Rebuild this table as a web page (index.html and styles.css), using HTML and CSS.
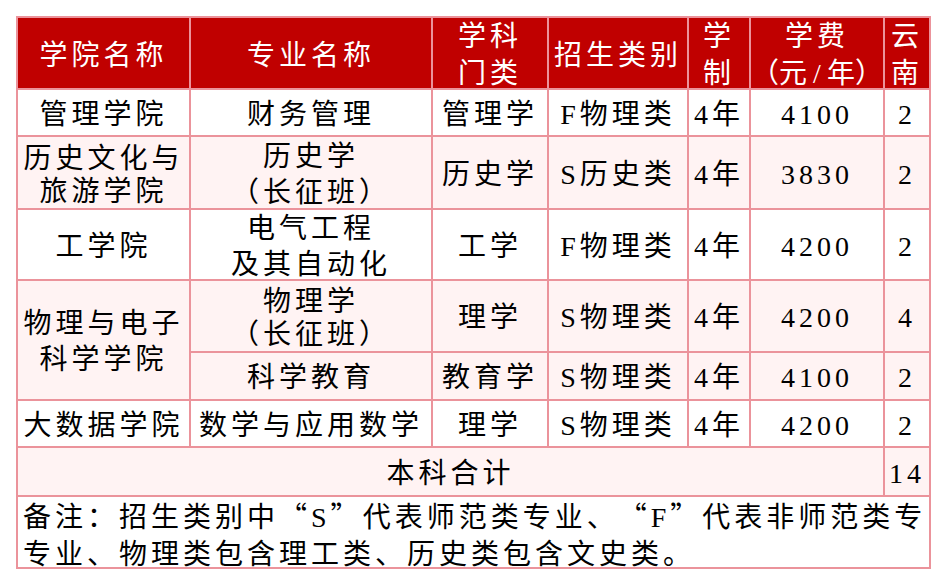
FILE: index.html
```html
<!DOCTYPE html>
<html lang="zh-CN">
<head>
<meta charset="utf-8">
<title>招生计划</title>
<link rel="stylesheet" href="styles.css">
</head>
<body>
<div class="page">
  <div class="sheet">
    <div class="c h"><span class="t">学院名称</span></div>
    <div class="c h"><span class="t">专业名称</span></div>
    <div class="c h"><span class="t">学科<br>门类</span></div>
    <div class="c h"><span class="t">招生类别</span></div>
    <div class="c h"><span class="t">学<br>制</span></div>
    <div class="c h"><span class="t">学费<br><span class="fee">（元<span class="slash">/</span>年）</span></span></div>
    <div class="c h"><span class="t">云<br>南</span></div>

    <div class="c"><span class="t">管理学院</span></div>
    <div class="c"><span class="t">财务管理</span></div>
    <div class="c"><span class="t">管理学</span></div>
    <div class="c"><span class="t">F物理类</span></div>
    <div class="c"><span class="t">4年</span></div>
    <div class="c"><span class="t">4100</span></div>
    <div class="c"><span class="t">2</span></div>

    <div class="c p tight"><span class="t">历史文化与<br>旅游学院</span></div>
    <div class="c p"><span class="t">历史学<br>（长征班）</span></div>
    <div class="c p"><span class="t">历史学</span></div>
    <div class="c p"><span class="t">S历史类</span></div>
    <div class="c p"><span class="t">4年</span></div>
    <div class="c p"><span class="t">3830</span></div>
    <div class="c p"><span class="t">2</span></div>

    <div class="c"><span class="t">工学院</span></div>
    <div class="c"><span class="t">电气工程<br>及其自动化</span></div>
    <div class="c"><span class="t">工学</span></div>
    <div class="c"><span class="t">F物理类</span></div>
    <div class="c"><span class="t">4年</span></div>
    <div class="c"><span class="t">4200</span></div>
    <div class="c"><span class="t">2</span></div>

    <div class="c p rows2"><span class="t">物理与电子<br>科学学院</span></div>
    <div class="c p tight"><span class="t">物理学<br>（长征班）</span></div>
    <div class="c p"><span class="t">理学</span></div>
    <div class="c p"><span class="t">S物理类</span></div>
    <div class="c p"><span class="t">4年</span></div>
    <div class="c p"><span class="t">4200</span></div>
    <div class="c p"><span class="t">4</span></div>

    <div class="c p"><span class="t">科学教育</span></div>
    <div class="c p"><span class="t">教育学</span></div>
    <div class="c p"><span class="t">S物理类</span></div>
    <div class="c p"><span class="t">4年</span></div>
    <div class="c p"><span class="t">4100</span></div>
    <div class="c p"><span class="t">2</span></div>

    <div class="c"><span class="t">大数据学院</span></div>
    <div class="c"><span class="t">数学与应用数学</span></div>
    <div class="c"><span class="t">理学</span></div>
    <div class="c"><span class="t">S物理类</span></div>
    <div class="c"><span class="t">4年</span></div>
    <div class="c"><span class="t">4200</span></div>
    <div class="c"><span class="t">2</span></div>

    <div class="c p cols6"><span class="t">本科合计</span></div>
    <div class="c p"><span class="t">14</span></div>

    <div class="c note"><span class="t">备注：招生类别中<span class="q">“</span>S<span class="q">”</span>代表师范类专业、<span class="q">“</span>F<span class="q">”</span>代表非师范类专<br>专业、物理类包含理工类、历史类包含文史类。</span></div>
  </div>
</div>
</body>
</html>
```

FILE: styles.css
```css
body {
  margin: 0;
  background: #ffffff;
}

.page {
  padding: 16px 0 0 16px;
}

.sheet {
  display: grid;
  grid-template-columns: 171px 240px 114px 138px 60px 132px 44px;
  grid-template-rows: 70px 45px 71px 69px 70px 46px 45px 47px 70px;
  gap: 2px;
  padding: 2px;
  width: max-content;
  background: #eb939b;
  font-family: "Liberation Serif", "Noto Sans CJK SC", serif;
  font-size: 28px;
  letter-spacing: 4px;
  line-height: 36px;
  color: #000000;
  text-spacing-trim: space-all;
}

.c {
  background: #ffffff;
  display: flex;
  align-items: center;
  justify-content: center;
  text-align: center;
  white-space: nowrap;
  padding-top: 4px;
  box-sizing: border-box;
  min-width: 0;
}

.t {
  display: block;
}

.h {
  background: #c00000;
  color: #ffffff;
  line-height: 37px;
}

.p {
  background: #fff3f3;
}

.tight {
  line-height: 33px;
}

.rows2 {
  grid-row: span 2;
}

.cols6 {
  grid-column: span 6;
}

.fee {
  letter-spacing: 0;
}

.slash {
  margin: 0 6px;
}

.q {
  font-family: "Noto Sans CJK SC", sans-serif;
}

.note {
  grid-column: span 7;
  justify-content: flex-start;
  text-align: left;
  padding-left: 5px;
  padding-top: 6px;
  line-height: 37px;
}
```
